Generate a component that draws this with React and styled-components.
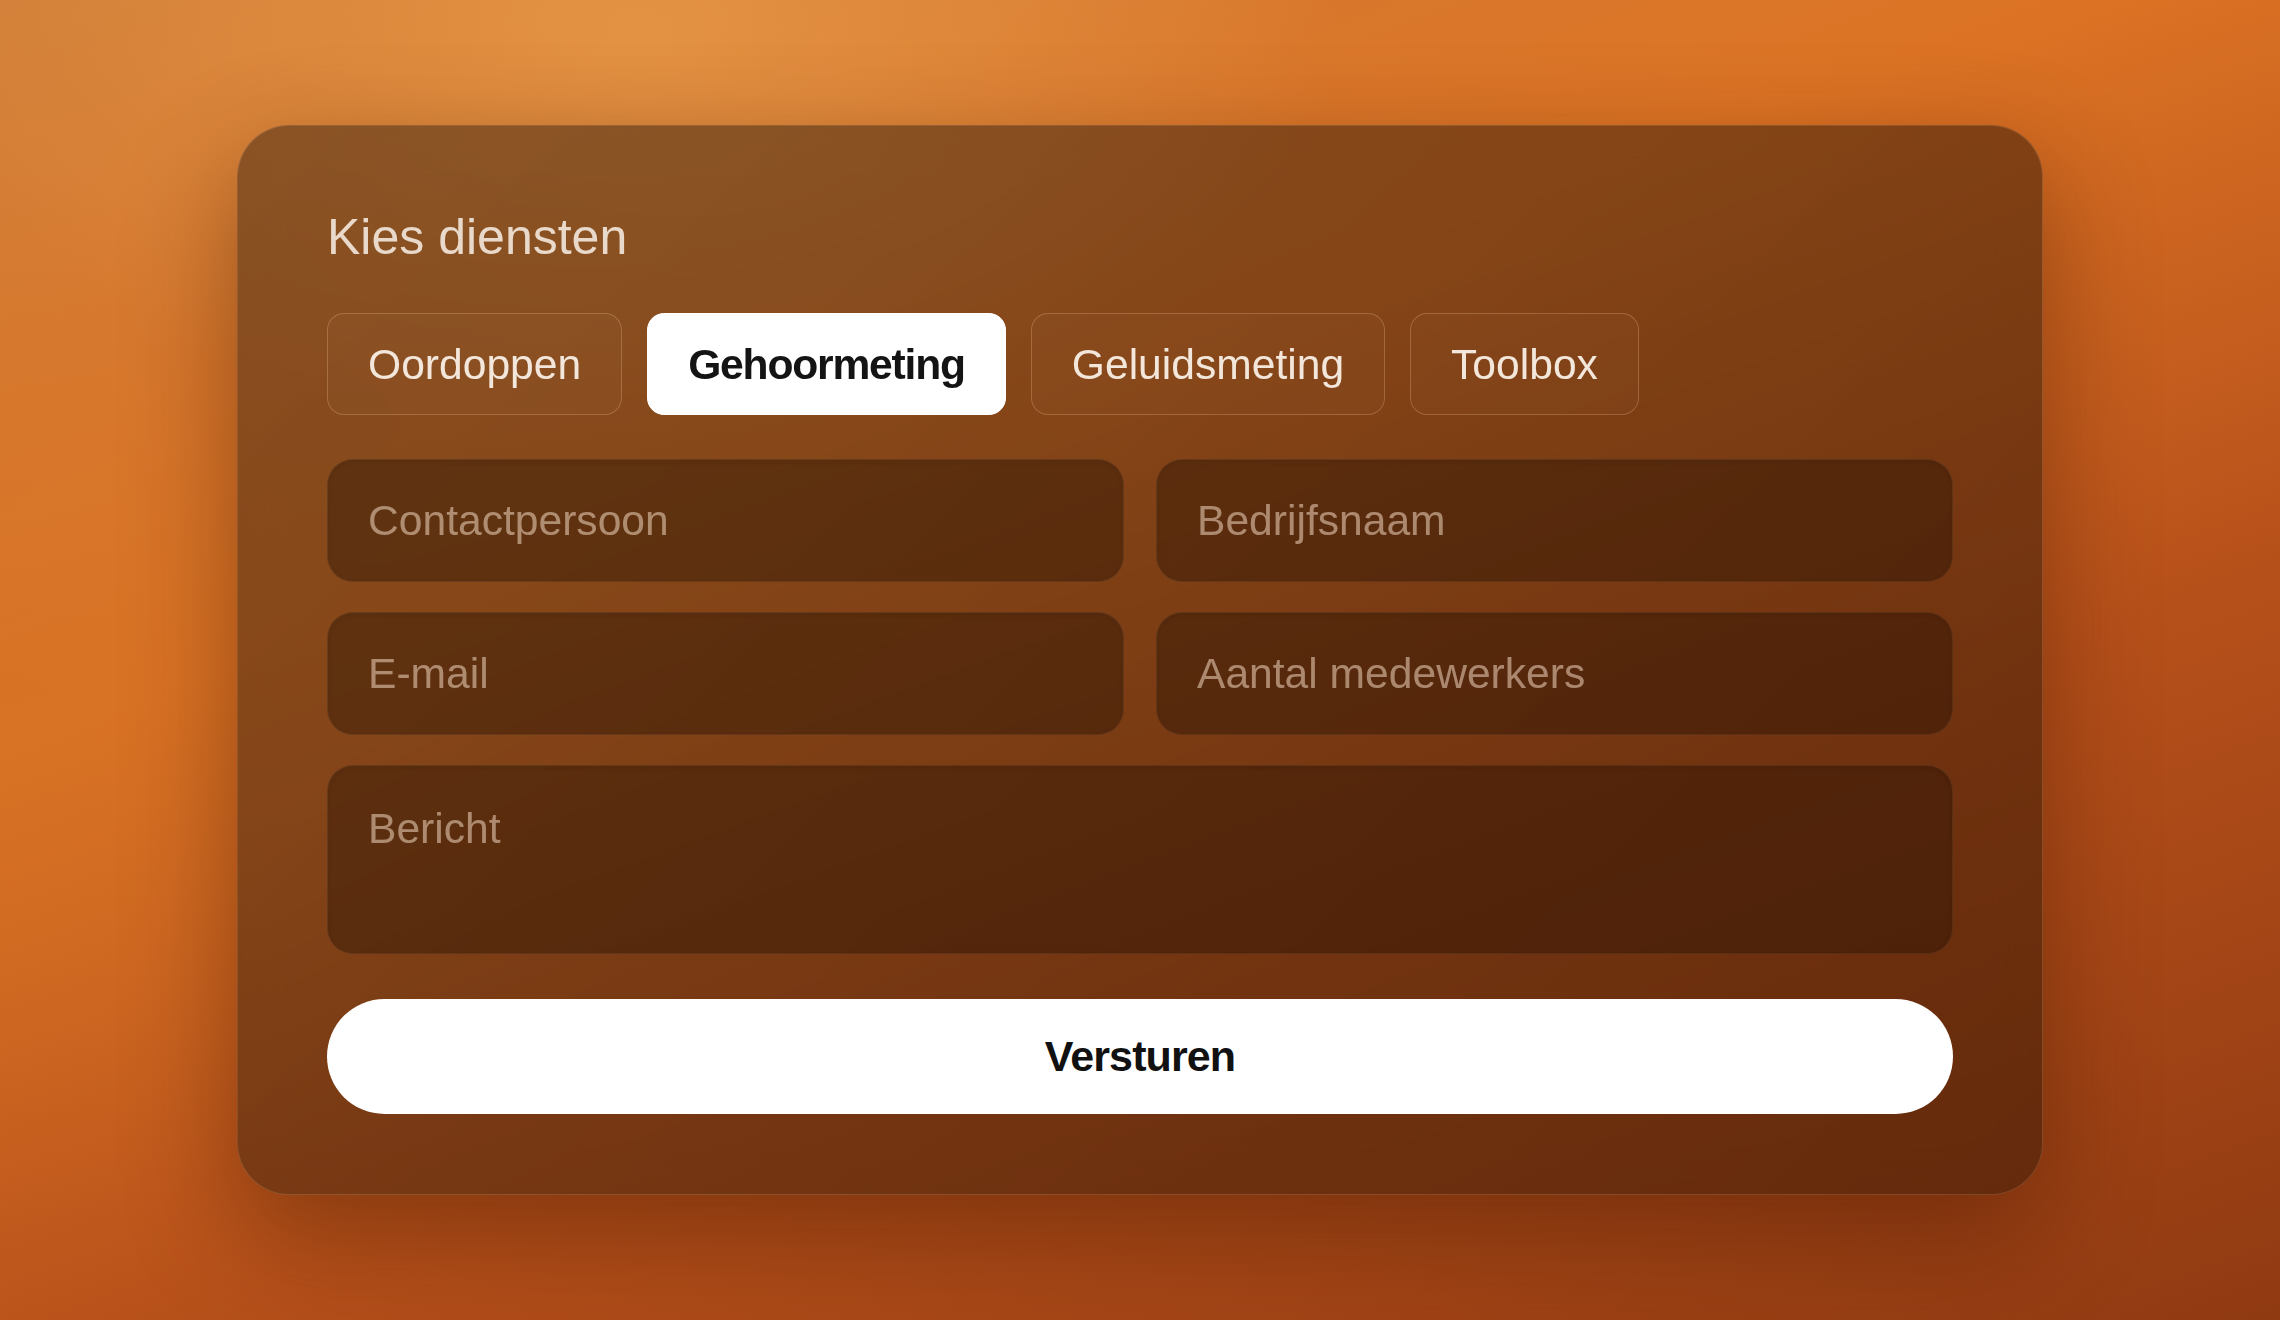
import React, { useState } from 'react';
import styled, { createGlobalStyle } from 'styled-components';

const GlobalStyle = createGlobalStyle`
    html, body {
        margin: 0;
        padding: 0;
        width: 100%;
        height: 100%;
    }
    body {
        font-family: "Liberation Sans", Arial, sans-serif;
    }
    #root {
        height: 100%;
    }
`;

const Page = styled.div`
    width: 100%;
    min-height: 100vh;
    display: flex;
    align-items: center;
    justify-content: center;
    background:
        radial-gradient(ellipse 1000px 600px at 28% 2%, rgba(230, 150, 70, 0.85), rgba(230, 150, 70, 0) 70%),
        radial-gradient(ellipse 800px 700px at 0% 55%, rgba(210, 112, 36, 0.45), rgba(210, 112, 36, 0) 70%),
        linear-gradient(160deg, #d2803a 0%, #dc7324 35%, #b6501a 65%, #903a12 100%);
`;

const Card = styled.form`
    width: 1806px;
    box-sizing: border-box;
    padding: 86px 89px 80px;
    border-radius: 52px;
    background: linear-gradient(135deg, rgba(72, 42, 20, 0.55) 0%, rgba(64, 28, 6, 0.6) 100%);
    border: 1px solid rgba(255, 210, 170, 0.16);
    box-shadow: 0 40px 110px rgba(70, 25, 0, 0.45);
    backdrop-filter: blur(20px);
    display: flex;
    flex-direction: column;
`;

const Title = styled.h2`
    margin: 0;
    font-size: 50px;
    line-height: 1;
    font-weight: 400;
    color: #e8d9ca;
`;

const ChipRow = styled.div`
    display: flex;
    gap: 25px;
    margin-top: 51px;
`;

const Chip = styled.button`
    height: 102px;
    box-sizing: border-box;
    padding: 0 40px;
    border-radius: 17px;
    font-family: inherit;
    font-size: 42.6px;
    cursor: pointer;
    border: 1px solid ${(p) => (p.$active ? '#fff' : 'rgba(255, 215, 175, 0.24)')};
    background: ${(p) => (p.$active ? '#fff' : 'rgba(255, 255, 255, 0.02)')};
    color: ${(p) => (p.$active ? '#141414' : '#f3e6da')};
    font-weight: ${(p) => (p.$active ? 700 : 400)};
    letter-spacing: ${(p) => (p.$active ? '-1.2px' : '0')};
`;

const Fields = styled.div`
    display: grid;
    grid-template-columns: 1fr 1fr;
    gap: 30px 32px;
    margin-top: 44px;
`;

const fieldBase = `
    box-sizing: border-box;
    width: 100%;
    border-radius: 26px;
    border: 1px solid rgba(255, 230, 200, 0.07);
    background: rgba(28, 14, 2, 0.38);
    color: #f3e6da;
    font-family: inherit;
    font-size: 42.6px;
    outline: none;
    box-shadow: inset 0 2px 4px rgba(0, 0, 0, 0.08);

    &::placeholder {
        color: rgba(255, 232, 210, 0.5);
    }
`;

const Input = styled.input`
    ${fieldBase}
    height: 123px;
    padding: 0 40px;
`;

const TextArea = styled.textarea`
    ${fieldBase}
    grid-column: 1 / -1;
    height: 189px;
    padding: 35px 40px;
    line-height: 1.3;
    resize: none;
`;

const SubmitButton = styled.button`
    margin-top: 45px;
    height: 115px;
    border: none;
    border-radius: 58px;
    background: #fff;
    color: #111;
    font-family: inherit;
    font-size: 43px;
    font-weight: 700;
    letter-spacing: -0.9px;
    cursor: pointer;
`;

const services = ['Oordoppen', 'Gehoormeting', 'Geluidsmeting', 'Toolbox'];

const App = () => {
    const [selected, setSelected] = useState('Gehoormeting');

    return (
        <>
            <GlobalStyle />
            <Page>
                <Card onSubmit={(e) => e.preventDefault()}>
                    <Title>Kies diensten</Title>
                    <ChipRow>
                        {services.map((s) => (
                            <Chip key={s} type="button" $active={selected === s} onClick={() => setSelected(s)}>
                                {s}
                            </Chip>
                        ))}
                    </ChipRow>
                    <Fields>
                        <Input placeholder="Contactpersoon" />
                        <Input placeholder="Bedrijfsnaam" />
                        <Input type="email" placeholder="E-mail" />
                        <Input placeholder="Aantal medewerkers" />
                        <TextArea placeholder="Bericht" />
                    </Fields>
                    <SubmitButton type="submit">Versturen</SubmitButton>
                </Card>
            </Page>
        </>
    );
};

export default App;
